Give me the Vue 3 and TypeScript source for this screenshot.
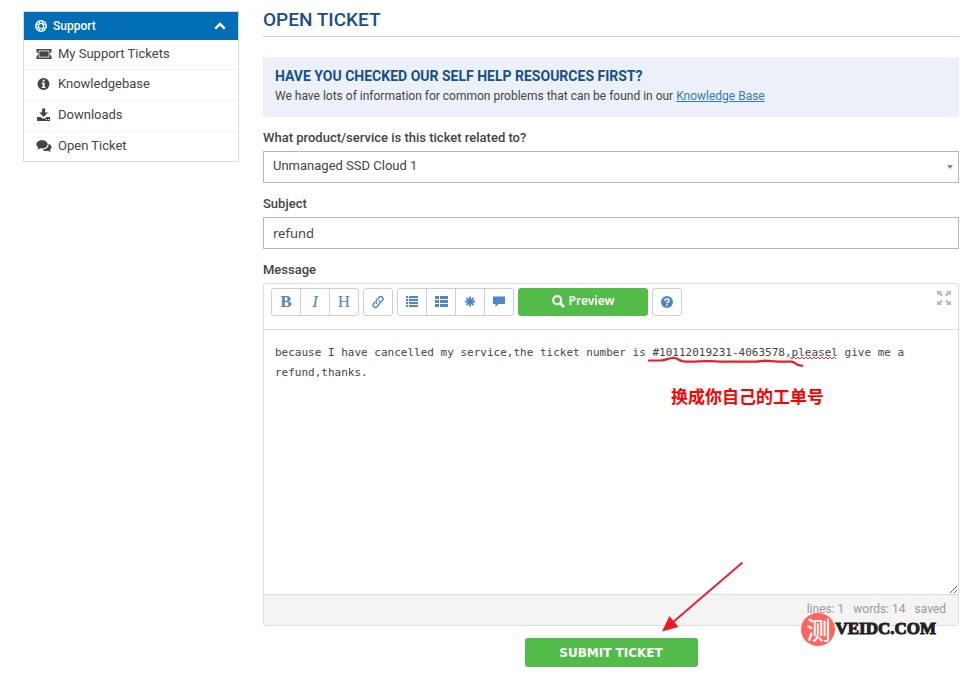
<script setup lang="ts">
import { ref } from 'vue'

interface NavItem {
  icon: 'ticket' | 'info' | 'download' | 'comments'
  label: string
}

const nav: NavItem[] = [
  { icon: 'ticket', label: 'My Support Tickets' },
  { icon: 'info', label: 'Knowledgebase' },
  { icon: 'download', label: 'Downloads' },
  { icon: 'comments', label: 'Open Ticket' },
]

const open = ref(true)
const product = ref('Unmanaged SSD Cloud 1')
const subject = ref('refund')
const message = ref(
  'because I have cancelled my service,the ticket number is #10112019231-4063578,pleasel give me a refund,thanks.',
)
</script>

<template>
  <div class="page">
    <aside class="sidebar">
      <button class="side-head" type="button" :aria-expanded="open" @click="open = !open">
        <svg class="ring" viewBox="0 0 12 12" width="12" height="12">
          <circle cx="6" cy="6" r="5.2" fill="none" stroke="#fff" stroke-width="1.500" />
          <circle cx="6" cy="6" r="2.6" fill="none" stroke="#fff" stroke-width="1.300" />
          <path d="M4.300 .9v3M7.700 .9v3M4.300 8.100v3M7.700 8.100v3M.9 4.300h3M.9 7.700h3M8.100 4.300h3M8.100 7.700h3" stroke="#fff" stroke-width="1.100" />
        </svg>
        <span>Support</span>
        <svg class="chevron" viewBox="0 0 12 8" width="12" height="8">
          <path d="M1.300 6.700 6 2l4.700 4.700" fill="none" stroke="#fff" stroke-width="2.400" />
        </svg>
      </button>
      <nav v-if="open">
        <a v-for="item in nav" :key="item.label" class="side-link" href="#">
          <svg v-if="item.icon === 'ticket'" viewBox="0 0 16 14" width="16" height="14">
            <path fill="currentColor" fill-rule="evenodd" d="M.5 2h15v3.300a1.600 1.600 0 0 0 0 3.400V12H.5V8.700a1.600 1.600 0 0 0 0-3.400zM2.700 3.600v6.800h10.600V3.600z" />
            <path fill="currentColor" d="M3.400 4.300h9.200v5.400H3.400z" />
          </svg>
          <svg v-else-if="item.icon === 'info'" viewBox="0 0 16 14" width="16" height="14">
            <path fill="currentColor" fill-rule="evenodd" d="M7.500 1a6 6 0 1 1 0 12 6 6 0 0 1 0-12zM6.600 2.800v1.700h2V2.800zM5.700 5.500v1.200h.9v3.100h-.9V11h3.800V9.800h-.9V5.500z" />
          </svg>
          <svg v-else-if="item.icon === 'download'" viewBox="0 0 16 14" width="16" height="14">
            <path fill="currentColor" fill-rule="evenodd" d="M6 .5h3.200v4H12L7.600 9 3.200 4.500H6zM1 9h3.600l1.700 1.600h2.600L10.600 9H14v4H1zM10 11v1h1v-1zM12 11v1h1v-1z" />
          </svg>
          <svg v-else viewBox="0 0 16 14" width="16" height="14">
            <path fill="currentColor" d="M6 1.200c3.200 0 5.600 1.800 5.600 4.100S9.200 9.400 6 9.400c-.6 0-1.100 0-1.600-.1-1 .8-2 1.100-3.200 1.200.6-.6 1-1.200 1.100-2C1.200 7.800.4 6.600.4 5.300c0-2.300 2.400-4.100 5.600-4.100z" />
            <path fill="currentColor" d="M12.500 4.700c1.900.7 3 1.900 3 3.400 0 1.200-.7 2.200-1.700 2.900.1.700.5 1.300 1.100 1.900-1.200-.1-2.200-.5-3.100-1.100-2 .3-4-.1-5.200-1.400 3.500.2 6.500-2.200 5.900-5.700z" />
          </svg>
          <span>{{ item.label }}</span>
        </a>
      </nav>
    </aside>

    <main class="main">
      <h1>Open Ticket</h1>

      <section class="notice">
        <h2>Have you checked our self help resources first?</h2>
        <p>We have lots of information for common problems that can be found in our <a href="#">Knowledge Base</a></p>
      </section>

      <form @submit.prevent>
        <label for="product">What product/service is this ticket related to?</label>
        <div class="select-box">
          <select id="product" v-model="product" class="field">
            <option>Unmanaged SSD Cloud 1</option>
          </select>
          <svg class="caret" viewBox="0 0 6 4" width="6" height="4"><path d="M0 0h6L3 4z" fill="#888" /></svg>
        </div>

        <label for="subject">Subject</label>
        <input id="subject" v-model="subject" class="field subject" type="text" />

        <label for="message">Message</label>
        <div class="editor">
          <div class="toolbar">
            <div class="group">
              <button type="button" class="tool bold" aria-label="Bold">B</button>
              <button type="button" class="tool italic" aria-label="Italic">I</button>
              <button type="button" class="tool heading" aria-label="Heading">H</button>
            </div>
            <div class="group">
              <button type="button" class="tool" aria-label="Link">
                <svg viewBox="0 0 14 14" width="14" height="14">
                  <g fill="none" stroke="currentColor" stroke-width="1.400" stroke-linecap="round">
                    <path d="M5.800 8.200a2.200 2.200 0 0 1-.1-3.200l2.500-2.700a2.200 2.200 0 0 1 3.300 3L10.200 6.800" />
                    <path d="M8.200 5.800a2.200 2.200 0 0 1 .1 3.200l-2.500 2.700a2.200 2.200 0 0 1-3.300-3L3.800 7.200" />
                  </g>
                </svg>
              </button>
            </div>
            <div class="group">
              <button type="button" class="tool" aria-label="Bulleted list">
                <svg viewBox="0 0 12 12" width="12" height="12">
                  <path fill="currentColor" d="M0 0h2v2H0zM3 0h9v2H3zM0 3h2v2H0zM3 3h9v2H3zM0 6h2v2H0zM3 6h9v2H3zM0 9h2v2H0zM3 9h9v2H3z" />
                </svg>
              </button>
              <button type="button" class="tool" aria-label="Numbered list">
                <svg viewBox="0 0 13 12" width="13" height="12">
                  <path fill="currentColor" d="M0 0h4v3H0zM5 0h8v3H5zM0 4h4v3H0zM5 4h8v3H5zM0 8h4v3H0zM5 8h8v3H5z" />
                </svg>
              </button>
              <button type="button" class="tool" aria-label="Code">
                <svg viewBox="0 0 12 12" width="12" height="12">
                  <path d="M6 .5v10M1 5.500h10M2.500 2l7 7M9.500 2l-7 7" stroke="currentColor" stroke-width="1.900" />
                </svg>
              </button>
              <button type="button" class="tool" aria-label="Quote">
                <svg viewBox="0 0 12 12" width="12" height="12">
                  <path fill="currentColor" d="M0 .5h12V8H5.500L2.500 11V8H0z" />
                </svg>
              </button>
            </div>
            <button type="button" class="preview">
              <svg viewBox="0 0 13 13" width="13" height="13">
                <circle cx="5.200" cy="5.200" r="4" fill="none" stroke="#fff" stroke-width="2.200" />
                <path d="M8 8l4 4" stroke="#fff" stroke-width="2.600" />
              </svg>
              <span>Preview</span>
            </button>
            <div class="group">
              <button type="button" class="tool" aria-label="Help">
                <svg viewBox="0 0 12 12" width="12" height="12">
                  <circle cx="6" cy="6" r="6" fill="currentColor" />
                  <path d="M4 4.700C4 2.300 8 2.300 8 4.500 8 5.800 6 5.800 6 7.200M6 8.300v1.500" fill="none" stroke="#fff" stroke-width="1.500" />
                </svg>
              </button>
            </div>
            <button type="button" class="expand" aria-label="Full screen">
              <svg viewBox="0 0 14 14" width="14" height="14">
                <path fill="#bbb" d="M0 0h5L3.600 1.400 6 3.800 4.300 5.500 1.700 3 0 4.700zM14 0v4.700L12.300 3 9.700 5.500 8 3.800l2.400-2.400L9 0zM0 14V9.300L1.700 11l2.600-2.500L6 10.200l-2.400 2.400L5 14zM14 14H9l1.400-1.400L8 10.200l1.700-1.700 2.600 2.500L14 9.300z" />
              </svg>
            </button>
          </div>
          <textarea id="message" v-model="message" spellcheck="false"></textarea>
          <div class="status">
            <span>lines: 1</span>
            <span>words: 14</span>
            <span>saved</span>
          </div>

          <svg class="marks" viewBox="263 283 696 384" width="696" height="384" aria-hidden="true">
            <path d="M790 357l2 2 2-2 2 2 2-2 2 2 2-2 2 2 2-2 2 2 2-2 2 2 2-2 2 2 2-2 2 2 2-2 2 2 2-2 2 2 2-2 2 2 2-2 2 2" fill="none" stroke="#e33" stroke-width="1" />
            <path d="M648 360.500h12c5 0 8-2 12-2.500 6-1 6 3 12 3.500 9 .8 16-.5 25-.5l11 .7h36c4 0 5-1 9-1l13 1h13c4 0 5 3 8 3.500l4 .8" fill="none" stroke="#ed1c24" stroke-width="2.200" />
            <path d="M742.500 562.500L672 623" stroke="#ed1c24" stroke-width="1.800" />
            <path d="M662 631.500l7.500-15.500 9 11z" fill="#ed1c24" />
          </svg>
          <span class="note">换成你自己的工单号</span>
          <div class="watermark"><span class="seal">测</span><span class="brand">VEIDC.COM</span></div>
        </div>

        <button class="submit" type="submit">SUBMIT TICKET</button>
      </form>
    </main>
  </div>
</template>

<style>
body {
  margin: 0;
  background: #fff;
}
</style>

<style scoped>
* {
  box-sizing: border-box;
}

.page {
  display: flex;
  align-items: flex-start;
  gap: 24px;
  padding: 11px 8px 8px 23px;
  color: #444;
  font: 13px/16px Roboto, sans-serif;
}

button,
input,
select,
textarea {
  margin: 0;
  font: inherit;
  color: inherit;
}

.sidebar {
  flex: 0 0 216px;
  border: 1px solid #d3deea;
}

.side-head {
  display: flex;
  align-items: center;
  gap: 6px;
  width: 100%;
  height: 28px;
  padding: 0 12px 0 11px;
  border: 0;
  background: #006db5;
  color: #fff;
  font-size: 12px;
  font-weight: 500;
}

.chevron {
  margin-left: auto;
}

.side-link {
  display: flex;
  align-items: center;
  gap: 6px;
  height: 30px;
  padding: 0 12px 2px;
  color: #444;
  text-decoration: none;
}

.side-link + .side-link {
  height: 31px;
  border-top: 1px solid #f0f2f4;
}

.side-link:last-child {
  height: 30px;
}

.side-link:first-child {
  height: 29px;
}

.main {
  flex: 1;
  min-width: 0;
}

h1 {
  margin: 0 0 20px;
  padding-bottom: 7px;
  border-bottom: 1px solid #ccc;
  color: #164f8b;
  font-size: 19px;
  font-weight: 500;
  line-height: 18px;
  text-transform: uppercase;
}

.notice {
  margin-bottom: 13px;
  padding: 9px 12px 11px;
  background: #ecf0f9;
}

h2 {
  margin: 0;
  color: #164f8b;
  font-size: 14px;
  font-weight: 700;
  line-height: 20px;
  text-transform: uppercase;
}

p {
  margin: 0;
  font-size: 12px;
  line-height: 20px;
}

p a {
  color: #337ab7;
}

label {
  display: block;
  margin-bottom: 5px;
  font-weight: 500;
  line-height: 16px;
}

.field {
  display: block;
  width: 100%;
  height: 32px;
  padding: 0 9px;
  border: 1px solid #b5b5b5;
  border-radius: 0;
  background: #fff;
}

.select-box {
  position: relative;
  margin-bottom: 13px;
}

select.field {
  appearance: none;
  padding-bottom: 2px;
}

.caret {
  position: absolute;
  right: 6px;
  top: 14px;
  pointer-events: none;
}

.subject {
  margin-bottom: 13px;
  font-family: "Noto Sans", sans-serif;
}

.editor {
  position: relative;
  border: 1px solid #ddd;
  border-radius: 3px;
}

.toolbar {
  display: flex;
  gap: 4px;
  height: 46px;
  padding: 4px 7px;
  border-bottom: 1px solid #ddd;
}

.group {
  display: flex;
}

.tool {
  display: flex;
  align-items: center;
  justify-content: center;
  width: 30px;
  height: 28px;
  padding: 0;
  border: 1px solid #ccd0d4;
  background: #fff;
  color: #4f86c8;
}

.tool + .tool {
  margin-left: -1px;
}

.tool:first-child {
  border-radius: 3px 0 0 3px;
}

.tool:last-child {
  border-radius: 0 3px 3px 0;
}

.tool:only-child {
  border-radius: 3px;
}

.bold,
.italic,
.heading {
  font-family: "Liberation Serif", serif;
  font-size: 17px;
}

.bold {
  font-weight: 700;
}

.italic {
  font-style: italic;
}

.preview,
.submit {
  border: 0;
  border-radius: 3px;
  background: #53bb49;
  color: #fff;
}

.preview {
  display: flex;
  align-items: center;
  justify-content: center;
  gap: 4px;
  width: 130px;
  height: 28px;
  padding: 0 0 2px;
  font-family: "Noto Sans", sans-serif;
  font-size: 12px;
  font-weight: 600;
}

.expand {
  display: flex;
  align-items: center;
  height: 20px;
  margin-left: auto;
  padding: 0;
  border: 0;
  background: none;
}

textarea {
  display: block;
  width: 100%;
  height: 264px;
  padding: 13px 12px 12px 11px;
  border: 0;
  outline: 0;
  resize: vertical;
  background: #fff;
  font: 11px/20px "DejaVu Sans Mono", monospace;
}

.status {
  display: flex;
  justify-content: flex-end;
  gap: 9px;
  height: 31px;
  padding: 6px 12px;
  border-top: 1px solid #ddd;
  background: #f4f4f4;
  color: #999;
  font-size: 12px;
}

.marks {
  position: absolute;
  top: -1px;
  left: -1px;
  pointer-events: none;
}

.note {
  position: absolute;
  top: 101px;
  left: 407px;
  color: #f00;
  font: 700 17px/22px "Noto Sans CJK SC", sans-serif;
  pointer-events: none;
}

.watermark {
  position: absolute;
  right: 22px;
  bottom: -22px;
  display: flex;
  align-items: center;
  height: 36px;
  pointer-events: none;
}

.seal {
  width: 34px;
  height: 33px;
  border-radius: 50%;
  background: #ff655f;
  color: #fff;
  font: 500 24px/32px "Noto Sans CJK SC", sans-serif;
  text-align: center;
}

.brand {
  color: #231f20;
  font: 700 17px/32px "Liberation Serif", serif;
  -webkit-text-stroke: 1px #231f20;
}

.submit {
  display: block;
  width: 173px;
  height: 29px;
  margin: 12px auto 0;
  padding: 0;
  font: 700 12px/16px "DejaVu Sans", sans-serif;
}
</style>
